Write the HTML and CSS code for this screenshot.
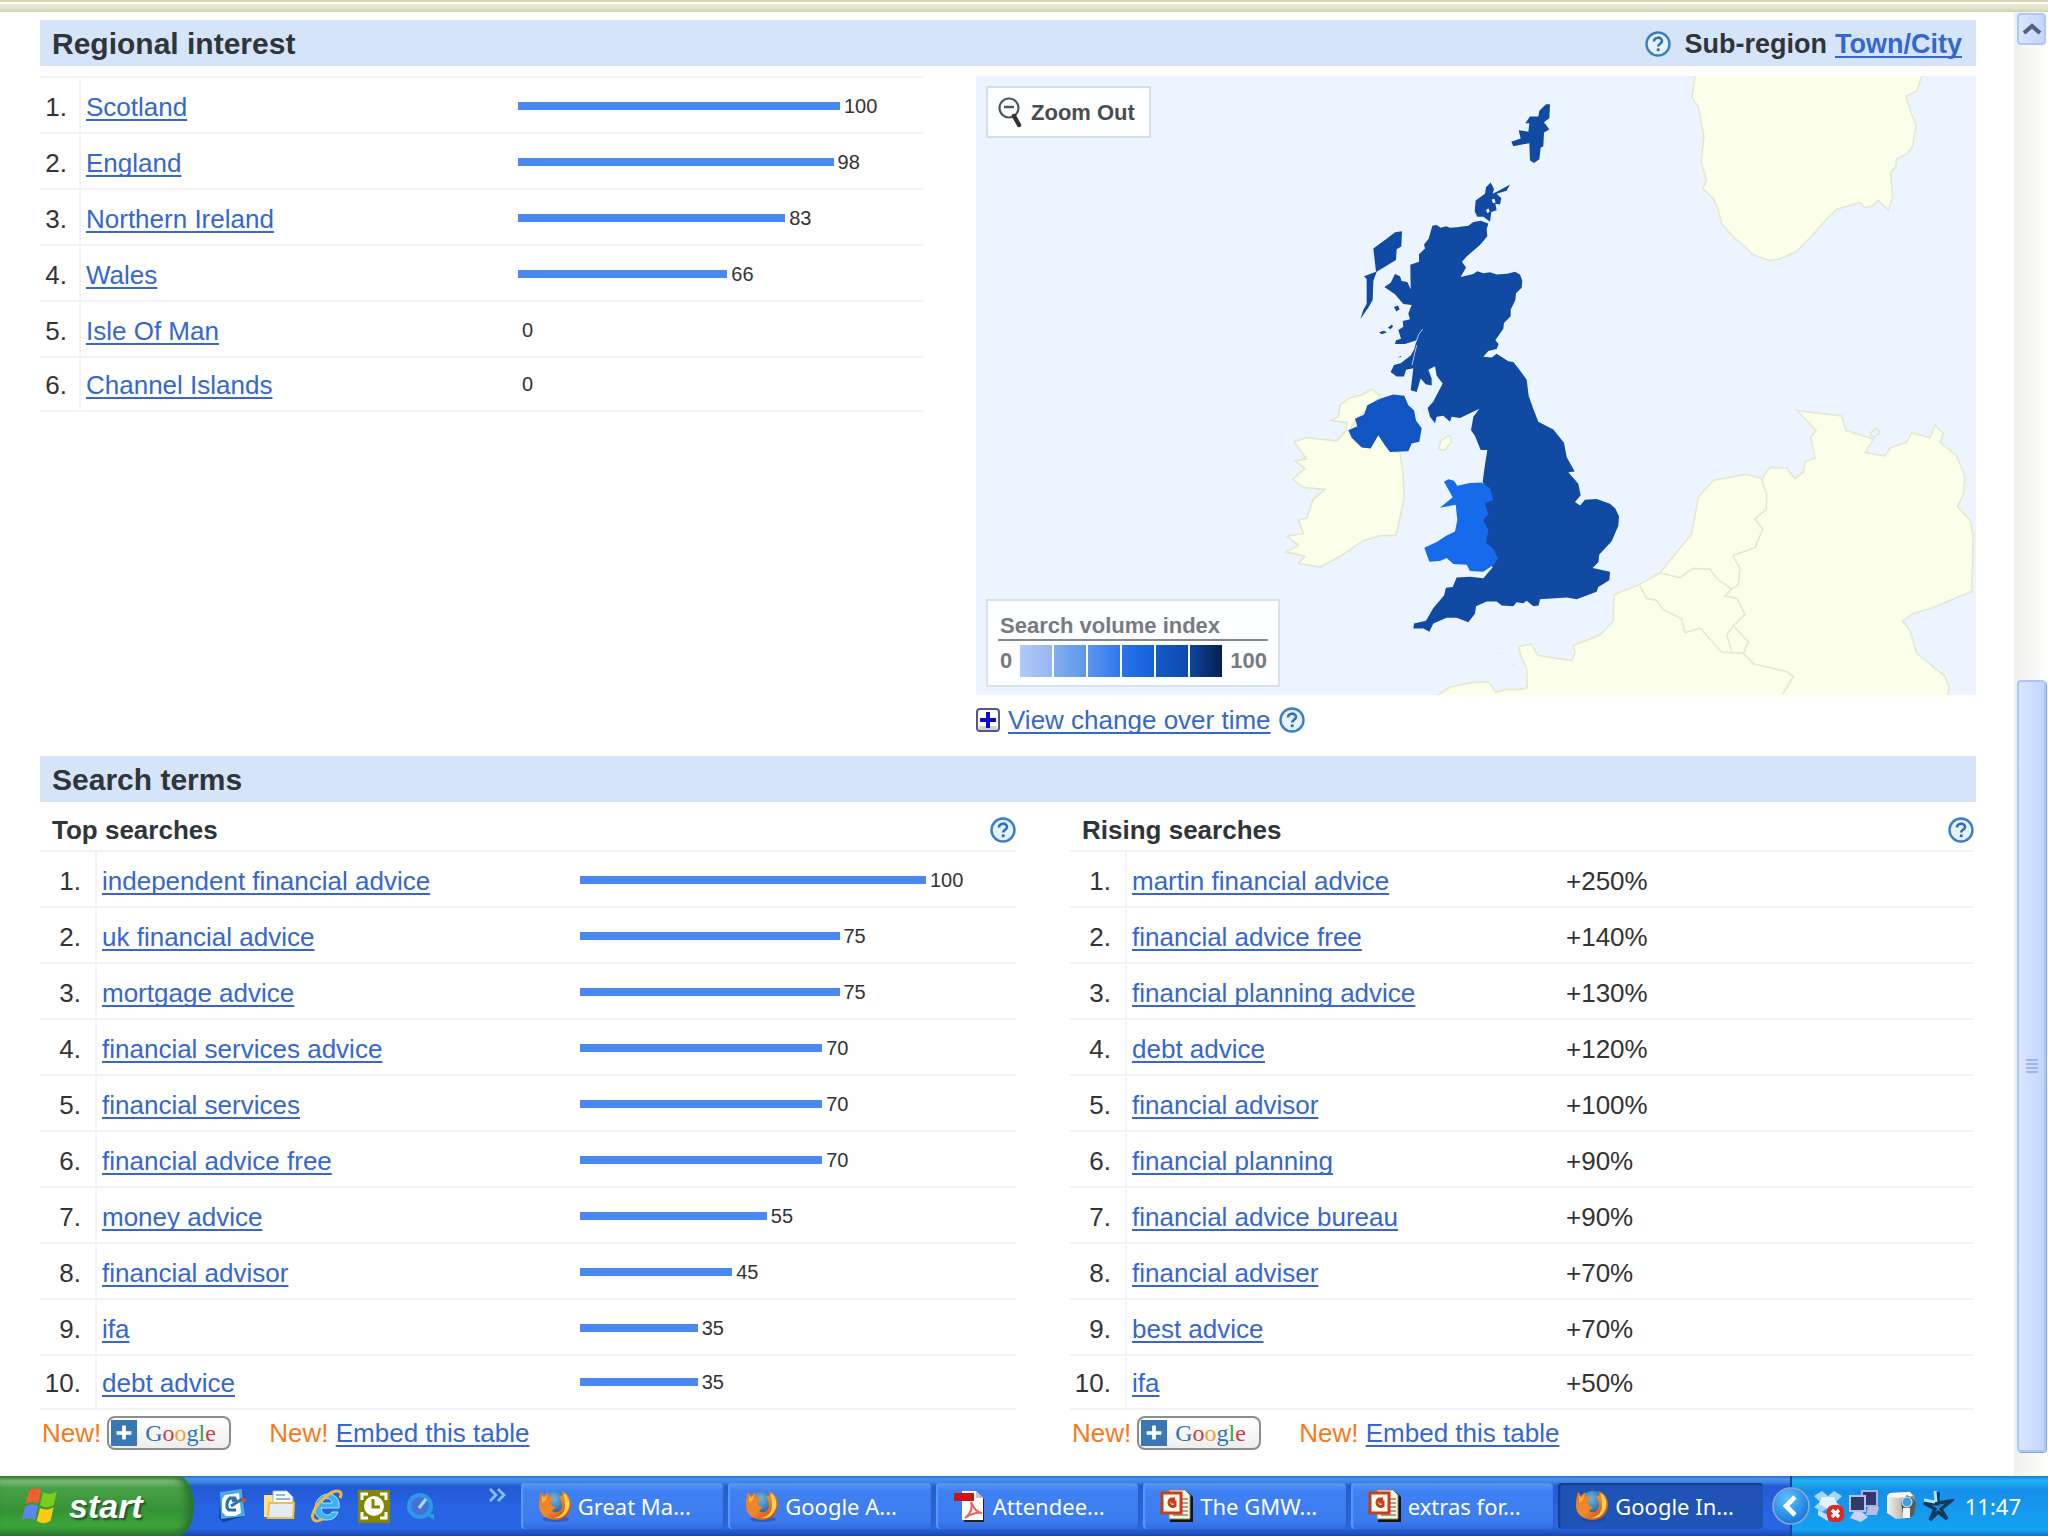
FILE: index.html
```html
<!DOCTYPE html>
<html lang="en">
<head>
<meta charset="utf-8">
<title>Google Insights for Search</title>
<link rel="stylesheet" href="styles.css">
</head>
<body>
<svg class="defs" aria-hidden="true">
  <defs>
    <linearGradient id="fox" x1="0" y1="0" x2="1" y2="1"><stop offset="0" stop-color="#ef7a1c"/><stop offset=".5" stop-color="#f0892a"/><stop offset="1" stop-color="#c53a10"/></linearGradient>
    <radialGradient id="globe" cx=".4" cy=".3" r=".8"><stop offset="0" stop-color="#6db8e8"/><stop offset="1" stop-color="#0c3f86"/></radialGradient>
    <radialGradient id="knob" cx=".4" cy=".3" r=".8"><stop offset="0" stop-color="#5cc4fa"/><stop offset="1" stop-color="#0d6bd8"/></radialGradient>
    <linearGradient id="camera" x1="0" y1="0" x2="1" y2="0"><stop offset="0" stop-color="#f4f2ea"/><stop offset="1" stop-color="#8d8a80"/></linearGradient>
    <symbol id="help" viewBox="0 0 26 26">
      <circle cx="13" cy="13" r="11.5" fill="#e6f3fd" stroke="#3a7fc4" stroke-width="2.4"/>
      <path d="M9 10.5c0-5 8-5 8-.6 0 2.8-3.8 2.8-3.8 5.6" fill="none" stroke="#2a70bd" stroke-width="2.6"/>
      <rect x="11.8" y="17.4" width="2.8" height="2.8" fill="#2a70bd"/>
    </symbol>
    <symbol id="firefox" viewBox="0 0 34 34">
      <ellipse cx="18" cy="30" rx="13" ry="3" fill="#1d3f93" opacity=".5"/>
      <circle cx="18" cy="15" r="13" fill="url(#globe)"/>
      <path d="M3 3l3 4 4-4 1 5 6 2-5 3 2 4 4 1-4 4c5 3 10 0 10-6 0-4-2-7-3-9 5 1 4-4 2-5 7 2 10 8 10 14 0 9-7 15-15 15S1 26 1 17C1 11 2 7 3 3z" fill="url(#fox)"/>
      <path d="M26 4c6 5 7 13 3 19-3 5-8 7-13 6 7-1 11-6 11-12 0-5-1-9-1-13z" fill="#fcd34c"/>
      <path d="M4 7l2 2 3-3-1 5-4 3z" fill="#fbb44d"/>
    </symbol>
    <symbol id="pdf" viewBox="0 0 34 34">
      <path d="M10 3h14l7 7v23H11z" fill="#222"/>
      <path d="M9 2h14l7 7v22H9z" fill="#fff"/>
      <path d="M23 2v7h7z" fill="#b9c4d4"/>
      <rect x="1" y="4" width="20" height="8" fill="#cc1414"/>
      <path d="M18 13c3 7 6 11 11 11-6-1-11 1-17 5 5-4 8-10 6-16z" fill="none" stroke="#f0605c" stroke-width="2"/>
    </symbol>
    <symbol id="ppt" viewBox="0 0 34 34">
      <path d="M12 3h16l5 5v25H10z" fill="#111"/>
      <path d="M9 1h16l5 5v24H9z" fill="#f4f1e4" stroke="#8b8776"/>
      <path d="M22 10h6M22 14h6M22 18h6M22 22h6M13 26h15" stroke="#8b8776" stroke-width="1.6"/>
      <rect x="2" y="4" width="19" height="20" fill="#fff" stroke="#c8400f" stroke-width="3"/>
      <path d="M15 10h-4a4 4 0 1 0 4 7v-4h-4" fill="none" stroke="#c8400f" stroke-width="3"/>
    </symbol>
  </defs>
</svg>

<div class="window-edge"></div>

<div class="viewport">
  <main class="report">
    <header class="band">
      <h1>Regional interest</h1>
      <div class="band-tools">
        <svg class="help"><use href="#help"/></svg>
        <b>Sub-region</b> <a href="#town"><b>Town/City</b></a>
      </div>
    </header>

    <section class="regional">
      <table class="list narrow">
        <colgroup><col class="c-num"><col class="c-region"><col></colgroup>
        <tr><td>1.</td><td><a href="#">Scotland</a></td><td><div class="meter"><i style="width:100%"></i><span>100</span></div></td></tr>
        <tr><td>2.</td><td><a href="#">England</a></td><td><div class="meter"><i style="width:98%"></i><span>98</span></div></td></tr>
        <tr><td>3.</td><td><a href="#">Northern Ireland</a></td><td><div class="meter"><i style="width:83%"></i><span>83</span></div></td></tr>
        <tr><td>4.</td><td><a href="#">Wales</a></td><td><div class="meter"><i style="width:65%"></i><span>66</span></div></td></tr>
        <tr><td>5.</td><td><a href="#">Isle Of Man</a></td><td><div class="meter"><i style="width:0%"></i><span>0</span></div></td></tr>
        <tr><td>6.</td><td><a href="#">Channel Islands</a></td><td><div class="meter"><i style="width:0%"></i><span>0</span></div></td></tr>
      </table>

      <div class="map-side">
        <div class="map">
          <svg class="map-art" viewBox="0 0 1000 619" role="img" aria-label="Map of search volume in the United Kingdom">
            <rect width="1000" height="619" fill="#ecf5ff"/>
            <g transform="translate(564 -77) scale(.33333 .45918)" fill="#fbffea" stroke="#e4e8cf" stroke-width="1.6">
              <path vector-effect="non-scaling-stroke" d="M466 160L456 215 475 235 492 300 483 355 500 395 488 412 520 435 535 460 545 490 580 518 615 540 640 557 690 570 720 566 770 550 820 512 860 480 890 458 960 443 975 455 1000 450 1015 438 1045 460 1058 430 1052 378 1068 365 1070 348 1100 338 1118 320 1128 275 1112 245 1098 212 1130 200 1150 160z"/>
              <path vector-effect="non-scaling-stroke" d="M-320 1530L-307 1517-271 1499-240 1494-197 1488-154 1487-133 1510-99 1503-60 1504-38 1499-40 1459-55 1435-65 1410-26 1405-7 1429 50 1436 95 1441 105 1425 100 1408 180 1385 220 1355 222 1297 290 1278 360 1250 455 1165 475 1085 520 1048 620 1035 665 1045 690 1020 740 1022 765 1045 790 1030 795 1008 825 1000 812 955 828 940 770 895 790 898 905 908 918 940 985 955 1000 960 975 988 1035 995 1050 978 1100 965 1115 945 1170 955 1185 928 1210 945 1200 965 1250 995 1275 1040 1270 1080 1252 1105 1290 1135 1300 1170 1295 1290 1180 1325 1120 1338 1088 1355 1110 1375 1130 1425 1215 1475 1228 1500 1220 1530z"/>
              <path vector-effect="non-scaling-stroke" fill="none" d="M665 1045L680 1080 678 1112 645 1132 668 1155 645 1195 578 1212 600 1240 595 1275 575 1285 530 1262 510 1242 460 1240 420 1260 360 1250M300 1278L320 1305 350 1310 370 1330 425 1350 435 1380 480 1370 545 1422 610 1425 640 1448 740 1465 760 1475 728 1514M575 1285L555 1300 590 1305 615 1340 580 1365 560 1385 575 1420M580 1365L625 1400 610 1425M990 945L1010 935 1020 945 1000 955z"/>
            </g>
            <g transform="translate(-16 483) scale(.40816 .33333)" fill="#e6eed8">
              <path d="M1312 284l10-4 2 6zM1344 318l12-4 4 8z"/>
            </g>
            <g transform="translate(294 -17) scale(.33333 .38265)">
              <g fill="#fbffea" stroke="#e2e7cc" stroke-width="1.6">
                <path vector-effect="non-scaling-stroke" d="M182 945L205 935 210 905 240 885 275 878 305 863 330 880 300 910 260 940 238 970 260 1000 330 985 370 1025 390 1030 400 1090 402 1150 378 1245 330 1246 280 1258 210 1300 150 1328 85 1318 105 1300 50 1288 85 1270 50 1248 100 1240 85 1205 110 1200 130 1150 165 1125 100 1120 68 1098 105 1070 75 1050 110 1045 72 1000 110 990 200 998 230 970 230 950z"/>
                <path vector-effect="non-scaling-stroke" d="M505 1020L515 995 540 983 545 1000 525 1022z"/>
              </g>
              <path fill="#1254c2" d="M235 970L262 960 255 940 282 930 292 905 330 888 370 877 403 880 415 905 432 918 438 945 455 965 448 1000 425 1005 415 1025 360 1027 345 1010 325 983 302 1018 275 1015 245 990z"/>
              <g fill="#114aa3">
                <path d="M487 436L500 434 512 441 528 437 540 441 560 440 595 436 610 426 632 423 655 430 650 445 652 463 630 486 590 516 576 530 588 545 572 570 610 562 622 555 640 560 660 557 680 563 712 561 735 556 750 563 757 580 755 598 738 612 736 630 722 655 722 672 702 690 700 705 676 735 686 745 680 758 655 763 640 778 665 780 680 770 715 790 730 792 745 808 770 838 776 880 790 915 805 948 850 968 882 1003 890 1040 914 1078 895 1080 925 1110 932 1140 915 1158 930 1167 945 1152 980 1150 1020 1162 1036 1175 1047 1195 1045 1220 1025 1260 988 1295 985 1315 968 1330 1020 1340 1018 1362 985 1380 980 1392 920 1412 890 1407 810 1412 806 1428 790 1430 770 1416 760 1422 740 1420 730 1430 695 1428 680 1418 650 1418 618 1430 615 1450 595 1472 560 1460 530 1460 490 1475 478 1497 460 1488 430 1488 432 1475 468 1468 490 1435 522 1402 528 1382 548 1380 560 1355 600 1353 640 1357 668 1328 630 1270 630 1160 650 1130 638 1105 645 1060 652 1022 632 1022 615 985 603 970 610 935 628 914 600 926 570 938 545 935 540 948 520 932 500 935 495 952 480 935 473 912 490 895 518 848 500 828 495 803 475 812 485 835 485 853 467 850 452 835 440 870 422 866 430 808 408 812 402 830 380 830 362 818 372 800 392 795 422 775 432 760 440 735 405 745 375 745 378 735 393 731 385 708 400 700 398 685 420 680 415 665 425 643 400 640 375 615 343 596 362 585 375 562 390 568 395 580 412 583 422 602 421 538 447 530 447 510 465 495 462 485 476 470z"/>
                <path d="M396 450L394 490 380 497 378 525 320 556 310 580 308 630 296 648 271 680 280 655 290 640 290 575 282 568 318 556 310 495 350 470 375 453zM372 648l12-4 5 10-10 6zM327 715l14-5 10 4-16 5zM354 702l12-8 3 6-8 6zM384 780l8-4 2 3z"/>
                <path d="M617 370L645 352 648 335 662 323 672 340 668 352 700 338 720 328 710 344 680 352 694 364 690 380 676 378 680 395 664 400 660 425 640 412 622 412 614 398z"/>
                <path d="M766 168L780 150 805 150 808 135 828 118 840 118 838 155 822 165 838 184 822 192 820 228 812 232 808 262 792 272 780 265 778 220 730 228 724 216 752 208 746 186 775 190 778 168z"/>
              </g>
              <path fill="#176aea" d="M522 1105L535 1098 552 1102 562 1115 600 1108 635 1107 660 1122 670 1152 645 1162 655 1190 640 1205 655 1230 648 1265 668 1278 684 1305 672 1322 640 1340 600 1338 590 1322 550 1320 530 1304 510 1312 478 1314 463 1277 500 1262 530 1245 555 1235 562 1205 557 1165 510 1173 548 1145z"/>
              <path d="M665 367l8-2 4 10-8 2zM648 394l8-3 3 8-7 4z" fill="#ecf5ff"/>
              <path d="M438 740l8-20 12-14M426 800l8-30 6-22" fill="none" stroke="#ecf5ff" stroke-width="2"/>
            </g>
          </svg>
          <button class="zoom-out" type="button">
            <svg viewBox="0 0 26 32" class="lens"><circle cx="12" cy="11" r="9.5" fill="#f8fbff" stroke="#555" stroke-width="2.2"/><path d="M7 10h10" stroke="#555" stroke-width="2.4"/><path d="M17 19l5 9" stroke="#333" stroke-width="4.4" stroke-linecap="round"/></svg>
            Zoom Out
          </button>
          <div class="legend">
            <div class="legend-title">Search volume index</div>
            <div class="legend-scale"><span>0</span><div class="ramp"><i></i><i></i><i></i><i></i><i></i><i></i></div><span>100</span></div>
          </div>
        </div>
        <div class="over-time">
          <svg class="plus" viewBox="0 0 24 24"><rect x="1" y="1" width="22" height="22" rx="3" fill="#fff" stroke="#55558f" stroke-width="2"/><path d="M3 18h18v4H3z" fill="#cfcfe0"/><path d="M12 4v16M4 12h16" stroke="#0a0ad0" stroke-width="4"/></svg>
          <a href="#">View change over time</a>
          <svg class="help"><use href="#help"/></svg>
        </div>
      </div>
    </section>

    <header class="band"><h2>Search terms</h2></header>

    <div class="terms">
      <section>
        <div class="sub"><h3>Top searches</h3><svg class="help"><use href="#help"/></svg></div>
        <table class="list">
          <colgroup><col class="c-rank"><col class="c-term"><col></colgroup>
          <tr><td>1.</td><td><a href="#">independent financial advice</a></td><td><div class="meter"><i style="width:100%"></i><span>100</span></div></td></tr>
          <tr><td>2.</td><td><a href="#">uk financial advice</a></td><td><div class="meter"><i style="width:75%"></i><span>75</span></div></td></tr>
          <tr><td>3.</td><td><a href="#">mortgage advice</a></td><td><div class="meter"><i style="width:75%"></i><span>75</span></div></td></tr>
          <tr><td>4.</td><td><a href="#">financial services advice</a></td><td><div class="meter"><i style="width:70%"></i><span>70</span></div></td></tr>
          <tr><td>5.</td><td><a href="#">financial services</a></td><td><div class="meter"><i style="width:70%"></i><span>70</span></div></td></tr>
          <tr><td>6.</td><td><a href="#">financial advice free</a></td><td><div class="meter"><i style="width:70%"></i><span>70</span></div></td></tr>
          <tr><td>7.</td><td><a href="#">money advice</a></td><td><div class="meter"><i style="width:54%"></i><span>55</span></div></td></tr>
          <tr><td>8.</td><td><a href="#">financial advisor</a></td><td><div class="meter"><i style="width:44%"></i><span>45</span></div></td></tr>
          <tr><td>9.</td><td><a href="#">ifa</a></td><td><div class="meter"><i style="width:34%"></i><span>35</span></div></td></tr>
          <tr><td>10.</td><td><a href="#">debt advice</a></td><td><div class="meter"><i style="width:34%"></i><span>35</span></div></td></tr>
        </table>
        <div class="share">
          <em>New!</em>
          <button class="google" type="button"><svg viewBox="0 0 28 28"><rect width="28" height="28" fill="#3a78b4"/><path d="M14 6v15M6 14h16" stroke="#fff" stroke-width="4"/></svg><span class="logo"><span class="b">G</span><span class="r">o</span><span class="y">o</span><span class="b">g</span><span class="g">l</span><span class="r">e</span></span></button>
          <span class="embed"><em>New!</em> <a href="#">Embed this table</a></span>
        </div>
      </section>

      <section>
        <div class="sub"><h3>Rising searches</h3><svg class="help"><use href="#help"/></svg></div>
        <table class="list">
          <colgroup><col class="c-rank"><col class="c-rising"><col></colgroup>
          <tr><td>1.</td><td><a href="#">martin financial advice</a></td><td>+250%</td></tr>
          <tr><td>2.</td><td><a href="#">financial advice free</a></td><td>+140%</td></tr>
          <tr><td>3.</td><td><a href="#">financial planning advice</a></td><td>+130%</td></tr>
          <tr><td>4.</td><td><a href="#">debt advice</a></td><td>+120%</td></tr>
          <tr><td>5.</td><td><a href="#">financial advisor</a></td><td>+100%</td></tr>
          <tr><td>6.</td><td><a href="#">financial planning</a></td><td>+90%</td></tr>
          <tr><td>7.</td><td><a href="#">financial advice bureau</a></td><td>+90%</td></tr>
          <tr><td>8.</td><td><a href="#">financial adviser</a></td><td>+70%</td></tr>
          <tr><td>9.</td><td><a href="#">best advice</a></td><td>+70%</td></tr>
          <tr><td>10.</td><td><a href="#">ifa</a></td><td>+50%</td></tr>
        </table>
        <div class="share">
          <em>New!</em>
          <button class="google" type="button"><svg viewBox="0 0 28 28"><rect width="28" height="28" fill="#3a78b4"/><path d="M14 6v15M6 14h16" stroke="#fff" stroke-width="4"/></svg><span class="logo"><span class="b">G</span><span class="r">o</span><span class="y">o</span><span class="b">g</span><span class="g">l</span><span class="r">e</span></span></button>
          <span class="embed"><em>New!</em> <a href="#">Embed this table</a></span>
        </div>
      </section>
    </div>
  </main>

  <div class="scrollbar">
    <button class="scroll-up" type="button" aria-label="Scroll up"><svg viewBox="0 0 20 14"><path d="M2 11l8-7 8 7" fill="none" stroke="#4d6185" stroke-width="4"/></svg></button>
    <div class="scroll-gap"></div>
    <div class="thumb"><i></i><i></i><i></i><i></i></div>
  </div>
</div>

<footer class="taskbar">
  <button class="start" type="button">
    <svg viewBox="0 0 36 36" class="flag">
      <path d="M8 3c5-3 8-2 11 0l-3 13c-4-2-7-2-12 0z" fill="#f0622a"/>
      <path d="M21 5c4 2 8 2 13-1l-3 13c-5 3-9 3-13 0z" fill="#7ccc1e"/>
      <path d="M4 18c5-2 8-2 12 0l-3 13c-4-2-8-2-12 0z" fill="#5b86ee"/>
      <path d="M18 20c4 2 8 2 13-1l-3 13c-5 3-9 3-13 0z" fill="#fbcb10"/>
    </svg>
    start
  </button>

  <nav class="quick">
    <svg viewBox="0 0 32 34"><path d="M4 4l22-3 2 26-22 6-4-4z" fill="#0f4488"/><path d="M3 3l22-3 3 27-24 3z" fill="#4fa8e6"/><path d="M8 6l14-2 2 20-6 3H9l-4-4V10z" fill="#fff"/><path d="M19 9h-6c-4 3-4 10-1 12h7M15 12l5-2M14 17l13-8" fill="none" stroke="#2a6fb8" stroke-width="3"/><path d="M24 8l6 3-4 3z" fill="#d8501c"/></svg>
    <svg viewBox="0 0 32 34"><path d="M1 8h9l2 3h19v19H1z" fill="#9c7023"/><path d="M0 6h9v22H0z" fill="#ffe18b"/><path d="M9 2h14l6 6v14H9z" fill="#fff" stroke="#8fb8e4"/><path d="M12 6h9M12 10h14" stroke="#8fb8e4" stroke-width="2"/><path d="M5 14h25l-1 15H4z" fill="#e3ebf7" stroke="#f0bd4f" stroke-width="2"/></svg>
    <svg viewBox="0 0 32 34"><path d="M28 19H10c1 8 9 9 11 4h6c-2 6-6 8-12 8C6 31 3 24 4 18 5 10 11 5 17 5c9 0 12 7 11 14zM11 14h10c-1-6-9-6-10 0z" fill="#3cb3f2" stroke="#a5e4ff"/><path d="M29 9c4-8-4-9-12-3C7 13-2 26 3 31c2 2 5 1 9-1" fill="none" stroke="#f4b838" stroke-width="3"/></svg>
    <svg viewBox="0 0 32 34"><rect width="32" height="33" y="1" fill="#858500"/><path d="M4 11V5h6M22 5h6v6M28 23v6h-6M10 29H4v-6" fill="none" stroke="#fff" stroke-width="3"/><circle cx="16" cy="17" r="10" fill="#fff"/><path d="M15 10v8h7" fill="none" stroke="#858500" stroke-width="3"/></svg>
    <svg viewBox="0 0 32 34"><circle cx="15" cy="17" r="11" fill="#4b6fd8" stroke="#2b9ae8" stroke-width="4"/><path d="M14 19l7-9" stroke="#9fe0ff" stroke-width="3"/><path d="M20 25h9v6z" fill="#2b9ae8"/></svg>
  </nav>
  <svg class="more" viewBox="0 0 18 14"><path d="M2 1l6 6-6 6M10 1l6 6-6 6" fill="none" stroke="#8fc0fa" stroke-width="2.6"/></svg>

  <nav class="tasks">
    <button type="button"><svg><use href="#firefox"/></svg>Great Ma...</button>
    <button type="button"><svg><use href="#firefox"/></svg>Google A...</button>
    <button type="button"><svg><use href="#pdf"/></svg>Attendee...</button>
    <button type="button"><svg><use href="#ppt"/></svg>The GMW...</button>
    <button type="button"><svg><use href="#ppt"/></svg>extras for...</button>
    <button type="button" class="active"><svg><use href="#firefox"/></svg>Google In...</button>
  </nav>

  <div class="tray">
    <button class="expand" type="button" aria-label="Show hidden icons"><svg viewBox="0 0 38 38"><circle cx="19" cy="19" r="18" fill="url(#knob)" stroke="#8fa6d4" stroke-width="1.6"/><path d="M23 10l-9 9 9 9" fill="none" stroke="#fff" stroke-width="4.6"/></svg></button>
    <svg viewBox="0 0 34 36"><path d="M2 8l8-5 6 5 6-5 8 5-6 6 6 5-8 5-6-4-6 4-8-5 6-5z" fill="#a6d6f5"/><path d="M6 22l10 5v6L6 27z" fill="#bfe0f6"/><path d="M10 9h12l3 7-9 5-9-5z" fill="#e3f3fd"/><rect x="15" y="17" width="17" height="17" rx="6" fill="#dc2a26"/><path d="M20 22l7 7M27 22l-7 7" stroke="#fff" stroke-width="3.4"/></svg>
    <svg viewBox="0 0 34 36"><rect x="14" y="3" width="15" height="15" fill="#2f3970" stroke="#a9b1dc" stroke-width="2"/><path d="M20 19h11l-2 8H18z" fill="#b9bce8"/><rect x="2" y="8" width="15" height="15" fill="#343a68" stroke="#b9c0e6" stroke-width="2"/><path d="M6 24h8l6 5-7 5-11-4z" fill="#cfd0f3"/></svg>
    <svg viewBox="0 0 34 36"><path d="M3 8l3-3 20-1 5 4v10l-5 12-14 1L3 25z" fill="url(#camera)"/><path d="M3 8l3-3 20-1 3 4-15 2z" fill="#faf9f2"/><path d="M17 14l6-7 6 4 3 4-2 12-7 4-4-4z" fill="#5a5a56"/><circle cx="23" cy="14" r="5" fill="#3ba0e6" stroke="#f4f4f4"/><path d="M19 20h7v10h-7z" fill="#f4f4f4"/></svg>
    <svg viewBox="0 0 34 36"><path d="M18 4v12l-14-1 11 6-5 11 8-8 9 7-6-10 10-8-13 2" fill="none" stroke="#123a5e" stroke-width="3.4"/><path d="M15 3l1 11M4 12l11 2" stroke="#a8e6ff" stroke-width="3"/></svg>
    <time>11:47</time>
  </div>
</footer>
</body>
</html>
```

FILE: styles.css
```css
* { box-sizing: border-box; }

body {
  margin: 0;
  min-height: 100vh;
  display: flex;
  flex-direction: column;
  background: #fefefe;
  color: #333;
  font: 26px/30px "Liberation Sans", Arial, sans-serif;
}

h1, h2, h3 { margin: 0; color: #2f3538; }
h1, h2 { font-size: 30px; line-height: 44px; }
h3 { font-size: 26px; line-height: 30px; }
a { color: #3567cf; text-underline-offset: 3px; text-decoration-thickness: 2px; text-decoration-skip-ink: none; }
button { font: inherit; color: inherit; cursor: pointer; }
svg { display: block; flex: none; }
em { font-style: normal; color: #f77a1a; }

.defs { position: absolute; width: 0; height: 0; }
.window-edge {
  height: 12px;
  background: linear-gradient(#dad6bc 0 2px, #fffdf4 2px 4px, #ebe9d6 4px, #e2e1c6 9px, #cfcfb0 12px);
}

.viewport { flex: 1; display: flex; }
.report { flex: 1; min-width: 0; padding: 8px 38px 0 40px; }

.band {
  display: flex;
  justify-content: space-between;
  align-items: center;
  height: 46px;
  padding: 2px 14px 0 12px;
  background: #d5e4f9;
}
.band-tools { display: flex; align-items: center; gap: 8px; color: #2f3538; font-size: 27px; }
.help { width: 26px; height: 26px; }
.band-tools .help { margin-right: 6px; }

.regional {
  display: grid;
  grid-template-columns: 883fr 1000fr;
  column-gap: 53px;
  align-items: start;
  padding-top: 10px;
}

.list {
  width: 100%;
  table-layout: fixed;
  border-collapse: collapse;
  border-top: 2px solid #f2f2f8;
}
.list tr { height: 56px; border-bottom: 2px solid #f2f2f8; }
.list tr:last-child { height: 54px; }
.list td { padding: 4px 0 0; white-space: nowrap; }
.list tr:last-child td { padding-top: 2px; }
.list td:first-child { padding-right: 14px; text-align: right; border-right: 2px solid #f2f2f8; }
.list td:nth-child(2) { padding-left: 5px; }
.narrow td:first-child { padding-right: 12px; }
.c-num { width: 40px; }
.c-rank { width: 56px; }
.c-region { width: 438px; }
.c-term { width: 484px; }
.c-rising { width: 440px; }

.meter { display: flex; align-items: center; gap: 4px; height: 26px; margin-bottom: 2px; padding-right: 90px; }
.narrow .meter { padding-right: 83px; }
.meter i { flex: none; height: 8px; background: #4a8af0; }
.meter span { width: 0; font-size: 20px; line-height: 26px; }

.map { position: relative; }
.map-art { width: 100%; height: auto; }
.zoom-out {
  position: absolute;
  left: 10px;
  top: 10px;
  display: flex;
  align-items: center;
  gap: 8px;
  height: 52px;
  padding: 2px 14px 0 9px;
  border: 2px solid #d5dfe8;
  background: #fcfeff;
  color: #4a4d50;
  font-size: 22px;
  font-weight: bold;
}
.lens { width: 26px; height: 32px; }
.legend {
  position: absolute;
  left: 10px;
  bottom: 8px;
  width: 294px;
  height: 88px;
  padding: 12px 10px 0;
  border: 2px solid #d9e2e8;
  background: #fcfeff;
  color: #777b80;
  font-size: 22px;
  font-weight: bold;
}
.legend-title { padding-left: 2px; line-height: 26px; border-bottom: 2px solid #85888c; }
.legend-scale { display: flex; align-items: center; gap: 8px; padding: 4px 0 0 2px; }
.ramp { display: flex; gap: 2px; }
.ramp i { width: 32px; height: 32px; background: linear-gradient(90deg, #b0cbf8, #98b5f0); }
.ramp i:nth-child(2) { background: linear-gradient(90deg, #82aef0, #5f97ea); }
.ramp i:nth-child(3) { background: linear-gradient(90deg, #5b96ee, #3178ec); }
.ramp i:nth-child(4) { background: linear-gradient(90deg, #2a73e8, #1560d6); }
.ramp i:nth-child(5) { background: linear-gradient(90deg, #155ac8, #0f4aae); }
.ramp i:nth-child(6) { background: linear-gradient(90deg, #10449f, #06204c); }

.over-time { display: flex; align-items: center; gap: 8px; height: 61px; padding-bottom: 12px; }
.plus { width: 24px; height: 24px; }

.terms { display: grid; grid-template-columns: 976fr 904fr; column-gap: 54px; padding-right: 2px; }
.sub {
  display: flex;
  justify-content: space-between;
  align-items: center;
  height: 48px;
  padding: 8px 0 0 12px;
}

.share { display: flex; align-items: center; height: 46px; padding-left: 2px; }
.google {
  display: flex;
  align-items: center;
  gap: 8px;
  width: 124px;
  height: 34px;
  margin: 0 38px 0 6px;
  padding: 0 2px;
  border: 2px solid #8c8c8c;
  border-radius: 8px;
  background: linear-gradient(#fff, #eee);
}
.google svg { width: 26px; height: 26px; }
.logo { font: 24px/26px "Liberation Serif", serif; }
.b { color: #2f6fc0; }
.r { color: #d43a40; }
.y { color: #eda52c; }
.g { color: #3ca13f; }

.scrollbar {
  width: 34px;
  display: flex;
  flex-direction: column;
  padding: 1px 2px 24px 3px;
  background: linear-gradient(90deg, #f0f0ec, #fefefb);
}
.scroll-up, .thumb {
  display: flex;
  flex-direction: column;
  align-items: center;
  justify-content: center;
  border: 2px solid #a9c8f8;
  border-radius: 4px;
  background: linear-gradient(90deg, #dbe6ff, #c3d5fd);
}
.scroll-up { height: 32px; padding: 0; }
.scroll-up svg { width: 20px; height: 14px; }
.scroll-gap { flex: 637; }
.thumb { flex: 770; gap: 2px; box-shadow: 1px 1px 0 #86a8dc; }
.thumb i { width: 12px; height: 2px; background: #9bb6ee; }

.taskbar {
  display: flex;
  align-items: center;
  height: 60px;
  background: linear-gradient(#2d6cd6, #4592ee 3px, #3d86e8 6px, #2459d4 10px, #2763e2 32px, #2866e4 52px, #1b46b0);
  color: #fff;
  font-family: "Noto Sans", sans-serif;
  font-size: 22px;
}
.start {
  align-self: stretch;
  display: flex;
  align-items: center;
  gap: 10px;
  width: 194px;
  padding: 0 0 0 21px;
  border: 0;
  border-radius: 0 16px 16px 0 / 0 30px 30px 0;
  background: linear-gradient(#3a8a3a, #7fc07c 5px, #48a048 12px, #359335 34px, #3da53b 50px, #2a7a2c);
  box-shadow: inset -6px 0 8px #2b7030;
  color: #fff;
  font: italic bold 34px/40px "Liberation Sans", sans-serif;
  text-shadow: 2px 2px 2px #24502a;
}
.flag { width: 38px; height: 38px; }
.quick { display: flex; gap: 15px; padding-left: 23px; }
.quick svg { width: 32px; height: 34px; }
.more { width: 18px; height: 14px; margin: 0 15px 22px auto; }
.tasks { flex: 0 0 1242px; display: flex; gap: 3px; }
.tasks button {
  flex: 1;
  display: flex;
  align-items: center;
  gap: 6px;
  height: 46px;
  padding: 0 0 0 17px;
  border: 0;
  border-radius: 4px;
  background: linear-gradient(#5b98f8, #3f80f2 8px, #3c7cee 38px, #316bdc);
  box-shadow: inset 2px 0 1px #5c9afa, inset -2px 0 1px #2a60cc;
  white-space: nowrap;
}
.tasks svg { width: 34px; height: 34px; }
.tasks .active { background: #2053b6; box-shadow: inset 2px 2px 2px #16398a; }
.tray {
  align-self: stretch;
  display: flex;
  align-items: center;
  gap: 2px;
  margin-left: 27px;
  padding-right: 27px;
  border-left: 2px solid #10489c;
  background: linear-gradient(#1679d8, #1fb4f6 4px, #168fea 14px, #149bee 40px, #12a2f0 54px, #0f70c8);
}
.tray svg { width: 34px; height: 36px; }
.expand { margin-left: -20px; padding: 0; border: 0; background: none; }
.expand svg { width: 38px; height: 38px; }
.tray time { margin-left: 9px; }
```
